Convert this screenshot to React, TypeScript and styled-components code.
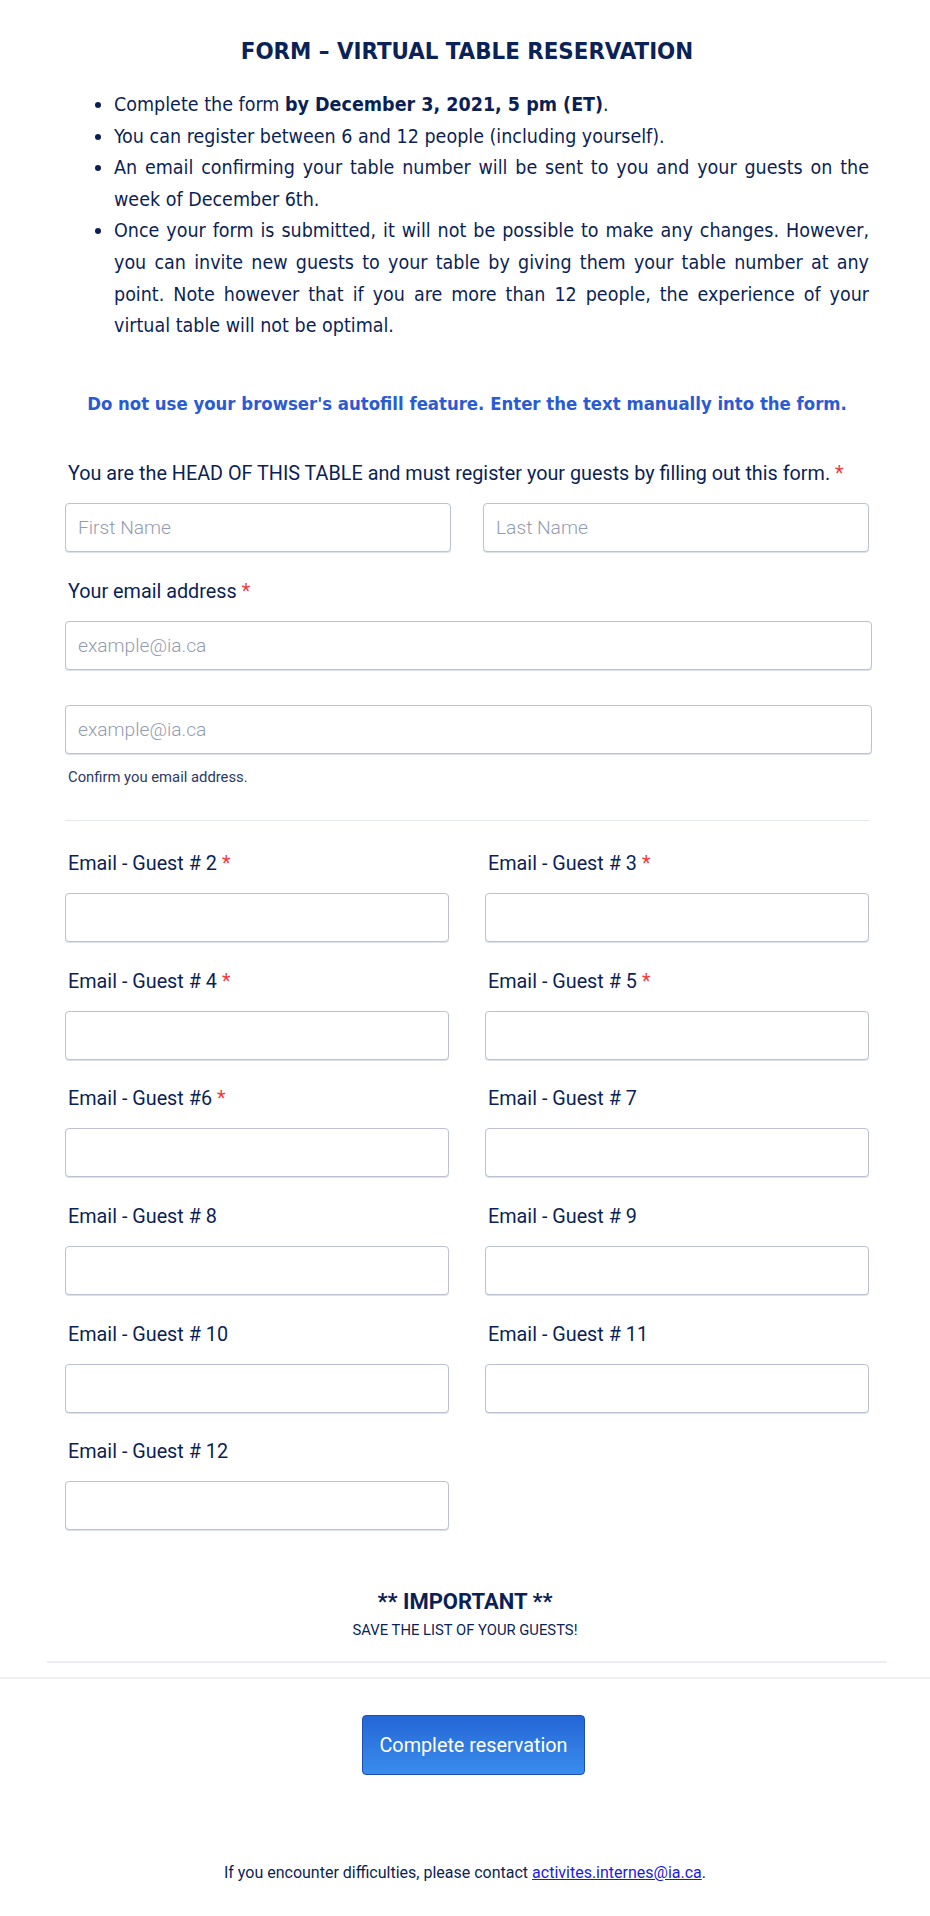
import React from "react";
import styled, { createGlobalStyle } from "styled-components";

const GlobalStyle = createGlobalStyle`
  html, body {
    margin: 0;
    padding: 0;
    background: #ffffff;
  }
  body {
    font-family: Roboto, "Liberation Sans", sans-serif;
    color: #0b1f56;
  }
`;

const Page = styled.div`
  width: 930px;
  min-height: 1916px;
  box-sizing: border-box;
  padding-top: 37px;
`;

const Intro = styled.section`
  padding: 0 61px 0 65px;
  font-family: "DejaVu Sans Condensed", "DejaVu Sans", sans-serif;
  font-stretch: condensed;
  color: #0b1f56;
`;

const Title = styled.h1`
  margin: 0;
  text-align: center;
  font-size: 23.8px;
  line-height: 28px;
  font-weight: bold;
  color: #0b2257;
`;

const Bullets = styled.ul`
  margin: 24px 0 0;
  padding-left: 49px;
  font-size: 19.5px;
  line-height: 31.6px;
  text-align: justify;

  li b {
    font-weight: bold;
  }
`;

const Notice = styled.p`
  margin: 51px 0 0;
  text-align: center;
  font-size: 18.4px;
  line-height: 22px;
  font-weight: bold;
  color: #2a5bd3;
`;

const Form = styled.form`
  margin: 47px 0 0;
  padding: 0 58px 0 65px;
`;

const Label = styled.label`
  display: block;
  padding-left: 3px;
  font-size: 19.8px;
  line-height: 24px;
  color: #0b1f56;
  margin-bottom: 17px;
`;

const Required = styled.span`
  color: #f23a3c;
  margin-left: 5px;
`;

const Input = styled.input`
  display: block;
  width: 100%;
  height: 49px;
  box-sizing: border-box;
  border: 1px solid #bcc2d2;
  border-radius: 4px;
  box-shadow: 0 1px 0 #dde1ea;
  padding: 0 12px;
  font-family: Roboto, "Liberation Sans", sans-serif;
  font-size: 19.2px;
  font-weight: 300;
  color: #0b1f56;
  background: #ffffff;
  outline: none;

  &::placeholder {
    color: #939bb2;
    font-weight: 300;
  }
`;

const NameRow = styled.div`
  display: grid;
  grid-template-columns: 1fr 1fr;
  column-gap: 32px;
  padding-right: 3px;
`;

const Block = styled.div<{ $top?: number }>`
  margin-top: ${(p) => p.$top ?? 0}px;
`;

const SubLabel = styled.div`
  margin-top: 14px;
  padding-left: 3px;
  font-size: 14.8px;
  line-height: 18px;
  color: #2b3a66;
`;

const Divider = styled.hr`
  margin: 34px 3px 0 0;
  border: none;
  border-top: 1px solid #e4e7ee;
`;

const GuestGrid = styled.div`
  margin-top: 31px;
  display: grid;
  grid-template-columns: 1fr 1fr;
  column-gap: 36px;
  row-gap: 27.7px;
  padding-right: 3px;
`;

const Important = styled.section`
  margin-top: 60px;
  text-align: center;
`;

const ImportantTitle = styled.div`
  font-size: 22px;
  line-height: 24px;
  font-weight: bold;
  color: #0b1f56;
`;

const ImportantNote = styled.div`
  margin-top: 7px;
  font-size: 14.8px;
  line-height: 18px;
  color: #0b1f56;
`;

const WideDivider = styled.hr`
  margin: 22px 43px 0 47px;
  border: none;
  border-top: 2px solid #eceef3;
`;

const FullLine = styled.div`
  margin-top: 14px;
  border-top: 2px solid #eef0f5;
`;

const ButtonRow = styled.div`
  display: flex;
  justify-content: center;
  margin-top: 36px;
  padding-left: 17px;
`;

const SubmitButton = styled.button`
  width: 223px;
  height: 60px;
  border: 1px solid #1c4fb4;
  border-radius: 4px;
  background: linear-gradient(#2466d5, #3a8ded);
  color: #ffffff;
  font-family: Roboto, "Liberation Sans", sans-serif;
  font-size: 19.8px;
  cursor: pointer;
`;

const Footer = styled.p`
  margin: 88px 0 0;
  text-align: center;
  font-size: 16px;
  line-height: 20px;
  color: #0b1f56;

  a {
    color: #1a1ae8;
    text-decoration: underline;
  }
`;

type Guest = { label: string; required?: boolean };

const guests: Guest[] = [
  { label: "Email - Guest # 2", required: true },
  { label: "Email - Guest # 3", required: true },
  { label: "Email - Guest # 4", required: true },
  { label: "Email - Guest # 5", required: true },
  { label: "Email - Guest #6", required: true },
  { label: "Email - Guest # 7" },
  { label: "Email - Guest # 8" },
  { label: "Email - Guest # 9" },
  { label: "Email - Guest # 10" },
  { label: "Email - Guest # 11" },
  { label: "Email - Guest # 12" },
];

export default function App() {
  return (
    <>
      <GlobalStyle />
      <Page>
        <Intro>
          <Title>FORM – VIRTUAL TABLE RESERVATION</Title>
          <Bullets>
            <li>
              Complete the form <b>by December 3, 2021, 5 pm (ET)</b>.
            </li>
            <li>You can register between 6 and 12 people (including yourself).</li>
            <li>
              An email confirming your table number will be sent to you and your
              guests on the week of December 6th.
            </li>
            <li>
              Once your form is submitted, it will not be possible to make any
              changes. However, you can invite new guests to your table by giving
              them your table number at any point. Note however that if you are
              more than 12 people, the experience of your virtual table will not
              be optimal.
            </li>
          </Bullets>
          <Notice>
            Do not use your browser's autofill feature. Enter the text manually
            into the form.
          </Notice>
        </Intro>

        <Form onSubmit={(e) => e.preventDefault()}>
          <Label>
            You are the HEAD OF THIS TABLE and must register your guests by
            filling out this form.<Required>*</Required>
          </Label>
          <NameRow>
            <Input placeholder="First Name" />
            <Input placeholder="Last Name" />
          </NameRow>

          <Block $top={28.5}>
            <Label>
              Your email address<Required>*</Required>
            </Label>
            <Input type="email" placeholder="example@ia.ca" />
          </Block>
          <Block $top={34.6}>
            <Input type="email" placeholder="example@ia.ca" />
            <SubLabel>Confirm you email address.</SubLabel>
          </Block>

          <Divider />

          <GuestGrid>
            {guests.map((g) => (
              <div key={g.label}>
                <Label>
                  {g.label}
                  {g.required && <Required>*</Required>}
                </Label>
                <Input type="email" />
              </div>
            ))}
          </GuestGrid>
        </Form>

        <Important>
          <ImportantTitle>** IMPORTANT **</ImportantTitle>
          <ImportantNote>SAVE THE LIST OF YOUR GUESTS!</ImportantNote>
        </Important>
        <WideDivider />
        <FullLine />

        <ButtonRow>
          <SubmitButton type="button">Complete reservation</SubmitButton>
        </ButtonRow>

        <Footer>
          If you encounter difficulties, please contact{" "}
          <a href="#">activites.internes@ia.ca</a>.
        </Footer>
      </Page>
    </>
  );
}
